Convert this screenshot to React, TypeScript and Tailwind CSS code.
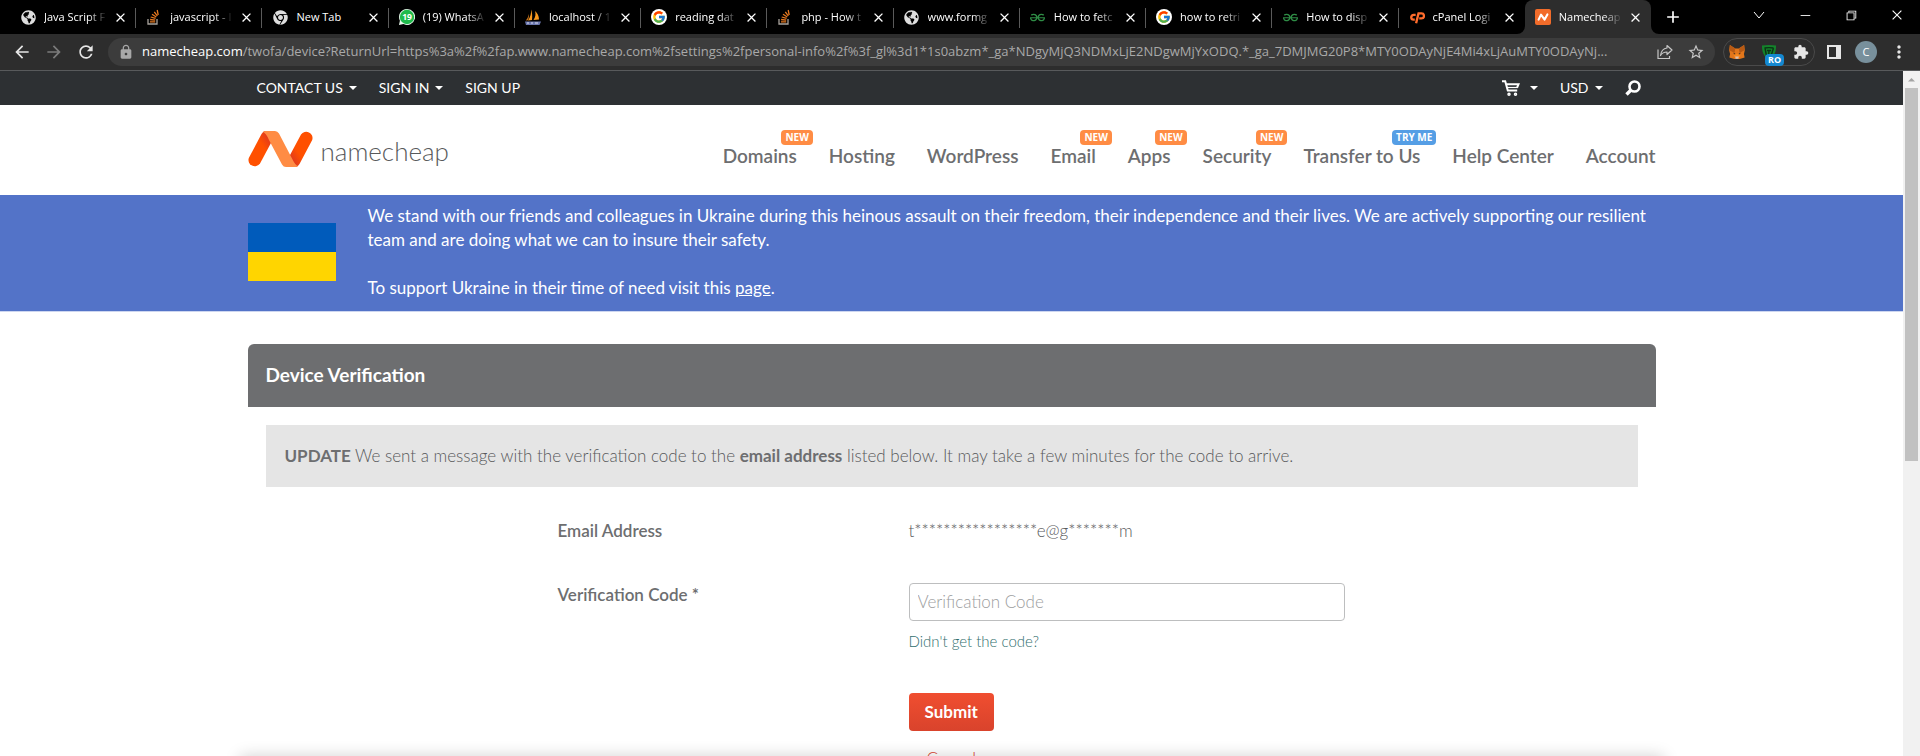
import { FaChrome, FaGlobeAmericas } from 'react-icons/fa';
import { FcGoogle } from 'react-icons/fc';
import { SiGeeksforgeeks } from 'react-icons/si';
import { MdClose, MdAdd, MdArrowBack, MdArrowForward, MdRefresh, MdLock, MdStarBorder, MdExtension, MdMoreVert } from 'react-icons/md';
import { VscChromeMinimize, VscChromeRestore, VscChromeClose } from 'react-icons/vsc';
import type { ReactNode } from 'react';

function WhatsAppIcon() {
  return (
    <svg viewBox="0 0 16 16" className="size-4">
      <path d="M8 0a8 8 0 1 1-3.6 15.1L0 16l.9-4.3A8 8 0 0 1 8 0z" fill="#e8f8ec" />
      <circle cx="8" cy="8" r="7.2" fill="#1fba4c" />
      <text x="8" y="11" textAnchor="middle" fontSize="8.5" fontWeight="700" fill="#fff" fontFamily="Open Sans, sans-serif">19</text>
    </svg>
  );
}

function StackIcon() {
  return (
    <svg viewBox="0 0 16 16" className="size-4" fill="none">
      <path d="M2 10v5h9v-5" stroke="#a8a29c" strokeWidth="1.3" />
      <path d="M4 12.800h5.200M4.100 10.500l5.100.6M4.700 8l4.900 1.400M6 5.300l4.300 2.700M8.300 2.800l3 4.100M11.200 1l1 5" stroke="#e8791f" strokeWidth="1.300" />
    </svg>
  );
}

function SailsIcon() {
  return (
    <svg viewBox="0 0 16 16" className="size-4">
      <path d="M6 .5C6.400 4 5.500 8 3 11.500l4-.5C7.500 7 7.200 3 6 .5zM10 2c1 3 .5 6-1.500 9l5.500-.5C14 7 12.500 4 10 2z" fill="#f8981d" />
      <path d="M3.500 5C3.500 7.500 2.500 9.500.8 11.500l2-.2C4 9 4.200 7 3.500 5z" fill="#c9731a" />
      <path d="M0 12.500h16l-1.500 3.500H1z" fill="#6c78af" />
      <path d="M2 14h2M6 14h2M10 14h3" stroke="#d8dcee" />
    </svg>
  );
}

function CpIcon() {
  return (
    <svg viewBox="0 0 18 16" className="w-[18px]" fill="none" stroke="#ff6c2c" strokeWidth="2.600">
      <path d="M7.500 5.500H5.200a2.700 2.700 0 0 0 0 5.400h1.300M8 15l2.700-11.200H14a2.800 2.800 0 0 1 0 5.700h-2.500" />
    </svg>
  );
}

function NamecheapTile() {
  return (
    <svg viewBox="0 0 16 16" className="size-4">
      <rect width="16" height="16" rx="2" fill="#f26c2a" />
      <path d="M3.600 10.600 6 5.600l3.600 5L12.400 5.400" fill="none" stroke="#fff" strokeWidth="2.100" strokeLinecap="round" strokeLinejoin="round" />
    </svg>
  );
}

function GoogleIcon() {
  return <span className="rounded-full bg-white p-px"><FcGoogle className="size-3.5" /></span>;
}

const tabs: { title: string; icon: ReactNode }[] = [
  { title: 'Java Script F', icon: <FaGlobeAmericas className="text-[#dedede]" /> },
  { title: 'javascript - I', icon: <StackIcon /> },
  { title: 'New Tab', icon: <FaChrome className="text-[#dedede]" /> },
  { title: '(19) WhatsA', icon: <WhatsAppIcon /> },
  { title: 'localhost / 1', icon: <SailsIcon /> },
  { title: 'reading dat', icon: <GoogleIcon /> },
  { title: 'php - How t', icon: <StackIcon /> },
  { title: 'www.formg', icon: <FaGlobeAmericas className="text-[#dedede]" /> },
  { title: 'How to fetc', icon: <SiGeeksforgeeks className="text-[#2f8d46]" /> },
  { title: 'how to retri', icon: <GoogleIcon /> },
  { title: 'How to disp', icon: <SiGeeksforgeeks className="text-[#2f8d46]" /> },
  { title: 'cPanel Logi', icon: <CpIcon /> },
  { title: 'Namecheap', icon: <NamecheapTile /> },
];

function TabStrip() {
  return (
    <div className="flex h-[34px] shrink-0 bg-black pl-2.5 text-white">
      <div className="grid min-w-0 flex-1 grid-cols-13">
        {tabs.map((tab, i) => {
          const active = i === tabs.length - 1;
          return (
            <div key={i} className={active ? 'relative flex items-center rounded-t-lg bg-[#2d2d2d] pl-2.5 pr-2' : 'relative flex items-center pl-2.5 pr-2'}>
              {active && (
                <>
                  <svg viewBox="0 0 8 8" className="absolute -left-2 bottom-0 size-2"><path d="M8 0v8H0a8 8 0 0 0 8-8z" fill="#2d2d2d" /></svg>
                  <svg viewBox="0 0 8 8" className="absolute -right-2 bottom-0 size-2"><path d="M0 0v8h8a8 8 0 0 1-8-8z" fill="#2d2d2d" /></svg>
                </>
              )}
              <span className="flex size-4 shrink-0 items-center justify-center text-[15px]">{tab.icon}</span>
              <span className={tab.title === 'New Tab' ? 'ml-2 min-w-0 flex-1 whitespace-nowrap text-[11px]' : 'ml-2 min-w-0 flex-1 whitespace-nowrap text-[11px] [mask-image:linear-gradient(to_right,black_70%,transparent)]'}>{tab.title}</span>
              <button aria-label={`Close ${tab.title}`} className="ml-1.5 shrink-0"><MdClose className="size-[15px]" /></button>
              {i < tabs.length - 2 && <span className="absolute right-0 top-2 h-5 w-px bg-[#5a5a5a]" />}
            </div>
          );
        })}
      </div>
      <button aria-label="New tab" className="ml-3 flex w-5 items-center justify-center"><MdAdd className="size-5" /></button>
      <div className="ml-[53px] flex">
        <button aria-label="Search tabs" className="flex w-[46px] items-center justify-center pb-1">
          <svg viewBox="0 0 12 8" className="w-3" fill="none" stroke="currentColor"><path d="m1 1 5 6 5-6" /></svg>
        </button>
        <button aria-label="Minimize" className="flex w-[46px] items-center justify-center pb-1"><VscChromeMinimize className="size-3.5" /></button>
        <button aria-label="Restore" className="flex w-[46px] items-center justify-center pb-1"><VscChromeRestore className="size-3.5" /></button>
        <button aria-label="Close window" className="flex w-[46px] items-center justify-center pb-1"><VscChromeClose className="size-3.5" /></button>
      </div>
    </div>
  );
}

function FoxIcon() {
  return (
    <svg viewBox="0 0 18 16" className="w-4">
      <path d="M1 0l6 4h4l6-4 .8 6-1 4 .8 4-4.600 1.400L11 16H7l-2-.6L.4 14l.8-4-1-4z" fill="#e2761b" />
      <path d="M1 0l6 4-.8 5L.5 6zM17 0l-6 4 .8 5 5.700-3z" fill="#b85a14" />
      <path d="M6.200 9l-1 3.400L7 14h4l1.800-1.600-1-3.400L9 10z" fill="#f6851b" />
      <path d="M4.500 8.600l2.600 1-.3 1.300zM13.500 8.600l-2.600 1 .3 1.300z" fill="#2b2320" />
      <path d="M7 13h4l-.4 2.500H7.400z" fill="#d7c1b3" />
    </svg>
  );
}

function ShieldIcon() {
  return (
    <svg viewBox="0 0 16 16" className="size-4">
      <path d="M1 1.500C6 .8 10 .8 15 1.500c.2 6-1.500 10.500-7 14C3 13 .8 8 1 1.500z" fill="#14832b" />
      <path d="M3.500 4c3-.5 6-.5 9 0M4 4l1.500 8M8 6.500 7.500 13M6 6.500h4M12.500 4 10 12" fill="none" stroke="#0b3315" strokeWidth="1.400" />
    </svg>
  );
}

function Toolbar() {
  return (
    <div className="flex h-[37px] shrink-0 items-center border-b border-[#585a5c] bg-[#2d2d2d] text-[#e6e6e6]">
      <button aria-label="Back" className="ml-3 flex w-5 justify-center"><MdArrowBack className="size-5" /></button>
      <button aria-label="Forward" className="ml-3 flex w-5 justify-center text-[#7b7b7b]"><MdArrowForward className="size-5" /></button>
      <button aria-label="Reload" className="ml-3 flex w-5 justify-center"><MdRefresh className="size-5" /></button>
      <div className="ml-3 flex h-7 min-w-0 flex-1 items-center rounded-full bg-[#3c3c3c] px-2.5">
        <MdLock className="size-4 shrink-0 text-[#a8a8a8]" />
        <p className="ml-2 min-w-0 flex-1 whitespace-nowrap text-[13px] text-[#a9a9a9]">
          <span className="text-white">namecheap.com</span>/twofa/device?ReturnUrl=https%3a%2f%2fap.www.namecheap.com%2fsettings%2fpersonal-info%2f%3f_gl%3d1*1s0abzm*_ga*NDgyMjQ3NDMxLjE2NDgwMjYxODQ.*_ga_7DMJMG20P8*MTY0ODAyNjE4Mi4xLjAuMTY0ODAyNj...
        </p>
        <button aria-label="Share" className="ml-3 text-[#c6c6c6]">
          <svg viewBox="0 0 16 16" className="size-4" fill="none" stroke="currentColor" strokeWidth="1.200">
            <path d="M1 5.500V14.500h11.500V12" />
            <path d="M10 1.500 15 6l-5 4.500V8C7 8 5 9 3.500 11.500 4 7.500 6.500 4.500 10 4z" strokeLinejoin="round" />
          </svg>
        </button>
        <button aria-label="Bookmark" className="ml-3.5 text-[#c6c6c6]"><MdStarBorder className="size-[18px]" /></button>
      </div>
      <div className="ml-2 flex h-7 w-[92px] items-center justify-between rounded-full border border-[#4a4a4a] px-[5px]">
        <FoxIcon />
        <span className="relative">
          <ShieldIcon />
          <span className="absolute -bottom-1.5 left-1 rounded-sm bg-[#1488d0] px-[3px] text-[9px] font-bold leading-3 text-white">RO</span>
        </span>
        <MdExtension className="size-4" />
      </div>
      <svg viewBox="0 0 14 14" className="ml-3 size-3.5"><path d="M0 0h14v14H0zM2 2v10h7V2z" fill="currentColor" fillRule="evenodd" /></svg>
      <span className="ml-3.5 flex size-[22px] items-center justify-center rounded-full bg-[#78909c] text-[11px] text-white">C</span>
      <button aria-label="Menu" className="ml-3 mr-[11px]"><MdMoreVert className="size-5" /></button>
    </div>
  );
}

function Caret() {
  return <svg viewBox="0 0 8 4" className="w-2"><path d="M0 0h8L4 4z" fill="currentColor" /></svg>;
}

function TopBar() {
  return (
    <div className="bg-[#2d3033] text-white">
      <div className="mx-auto flex h-[34px] max-w-[1408px] items-center px-[9px] text-sm">
        <button className="flex items-center gap-1.5">CONTACT US <Caret /></button>
        <button className="ml-[22px] flex items-center gap-1.5">SIGN IN <Caret /></button>
        <a href="#signup" className="ml-[22px]">SIGN UP</a>
        <button aria-label="Cart" className="ml-auto flex items-center gap-2.5">
          <svg viewBox="0 0 18 16" className="w-[18px]" fill="none" stroke="currentColor" strokeWidth="2">
            <path d="M0 1.200h3.200l2.600 9.300h9.400M4 4.200h12.500l-1.500 3.600" />
            <path d="M4.500 7.500h11" strokeWidth="1.200" />
            <circle cx="7" cy="14.200" r="1" strokeWidth="1.500" /><circle cx="13.500" cy="14.200" r="1" strokeWidth="1.500" />
          </svg>
          <Caret />
        </button>
        <button className="ml-[22px] flex items-center gap-1.5">USD <Caret /></button>
        <button aria-label="Search" className="ml-[22px] mr-1.5">
          <svg viewBox="0 0 16 16" className="size-4" fill="none" stroke="currentColor"><circle cx="9.500" cy="6.500" r="5" strokeWidth="2.600" /><path d="M6 10 1.500 14.500" strokeWidth="3.400" /></svg>
        </button>
      </div>
    </div>
  );
}

const nav: { label: string; badge?: string }[] = [
  { label: 'Domains', badge: 'NEW' },
  { label: 'Hosting' },
  { label: 'WordPress' },
  { label: 'Email', badge: 'NEW' },
  { label: 'Apps', badge: 'NEW' },
  { label: 'Security', badge: 'NEW' },
  { label: 'Transfer to Us', badge: 'TRY ME' },
  { label: 'Help Center' },
  { label: 'Account' },
];

function Logo() {
  return (
    <a href="#home" className="flex items-end gap-2 pb-0.5">
      <svg viewBox="0 0 65 36" className="w-[65px]">
        <defs>
          <linearGradient id="l1" x1="0" y1="1" x2="1" y2="0"><stop offset="0.600" stopColor="#ff5000" /><stop offset="1" stopColor="#cf2c2e" /></linearGradient>
          <linearGradient id="l2" x1="1" y1="0" x2="0" y2="1"><stop offset="0.600" stopColor="#ff5000" /><stop offset="1" stopColor="#cf2c2e" /></linearGradient>
        </defs>
        <path d="M17 0 23.500 11 12 32.500A6.300 6.300 0 0 1 .8 27L13.500 3Q15 .5 17 0z" fill="url(#l1)" />
        <path d="M48 36 41.500 25 53 3.500A6.300 6.300 0 0 1 64.200 9L51.500 33Q50 35.500 48 36z" fill="url(#l2)" />
        <path d="M17.500 0H27q2.500 0 4 2.500L44 27.500Q47 34 50 35 49 36 47.500 36H38q-2.500 0-4-2.500L21 9Q18 2 15 1 16 0 17.500 0z" fill="#ff8c44" />
      </svg>
      <span className="text-[26px] font-light leading-8 text-[#58595b]">namecheap</span>
    </a>
  );
}

function Header() {
  return (
    <header className="mx-auto flex h-[90px] max-w-[1408px] items-center justify-between">
      <Logo />
      <nav className="flex gap-8 pt-3 text-[19px] font-semibold leading-6 text-[#6d6e70]">
        {nav.map((item) => (
          <a key={item.label} href="#nav" className="relative whitespace-nowrap">
            {item.label}
            {item.badge && (
              <span className={item.badge === 'NEW' ? "absolute -right-4 -top-3.5 rounded bg-[#ff8c44] px-1 font-['Open_Sans',sans-serif] text-[10px] font-bold leading-[15px] text-white" : "absolute -right-4 -top-3.5 rounded bg-[#559ee5] px-1 font-['Open_Sans',sans-serif] text-[10px] font-bold leading-[15px] text-white"}>{item.badge}</span>
            )}
          </a>
        ))}
      </nav>
    </header>
  );
}

function Banner() {
  return (
    <section className="border-b border-[#cdd6f0] bg-[#5373c8] text-white">
      <div className="mx-auto flex max-w-[1408px] items-center gap-8 pb-[11px] pt-[9px]">
        <div className="flex h-[58px] w-[88px] shrink-0 flex-col">
          <span className="flex-1 bg-[#005bbb]" />
          <span className="flex-1 bg-[#ffd500]" />
        </div>
        <div className="text-[17px] leading-6">
          <p>We stand with our friends and colleagues in Ukraine during this heinous assault on their freedom, their independence and their lives. We are actively supporting our resilient team and are doing what we can to insure their safety.</p>
          <p className="mt-6">To support Ukraine in their time of need visit this <a href="#support" className="underline">page</a>.</p>
        </div>
      </div>
    </section>
  );
}

function VerificationPanel() {
  return (
    <section className="mx-auto mt-8 max-w-[1408px] text-[17px] leading-6 text-[#6d6e70]">
      <h1 className="rounded-t-md bg-[#6d6e70] px-[18px] pb-[21px] pt-[19px] text-[19px] font-bold leading-[23px] text-white">Device Verification</h1>
      <p className="mx-[18px] mt-[18px] bg-[#e5e5e5] px-[19px] py-[19px] font-light text-[#58595b]">
        <strong className="font-bold text-[#6d6e70]">UPDATE</strong> We sent a message with the verification code to the <strong className="font-bold text-[#6d6e70]">email address</strong> listed below. It may take a few minutes for the code to arrive.
      </p>
      <form className="grid grid-cols-[351px_1fr] pl-[310px] pt-8">
        <span className="font-semibold">Email Address</span>
        <span className="font-light text-[#58595b]">t*****************e@g*******m</span>
        <label htmlFor="code" className="mt-10 font-semibold">Verification Code *</label>
        <div className="mt-10">
          <input id="code" placeholder="Verification Code" className="block h-[38px] w-[436px] rounded border border-[#bdbebf] bg-white px-2 pb-0.5 font-light placeholder:text-[#9c9d9e]" />
          <a href="#resend" className="mt-2.5 block text-[15px] font-light leading-5 text-[#2f6e6d]">Didn't get the code?</a>
          <button type="button" className="mt-[42px] block h-[38px] rounded bg-linear-to-b from-[#f04e30] to-[#d9432c] px-4 font-bold text-white">Submit</button>
          <a href="#cancel" className="ml-[18px] mt-4 block font-light text-[#d9432c]">Cancel</a>
        </div>
      </form>
    </section>
  );
}

function Scrollbar() {
  return (
    <div aria-hidden="true" className="flex w-[17px] shrink-0 flex-col items-center bg-[#f1f1f1]">
      <svg viewBox="0 0 17 17" className="w-[17px]"><path d="M5 10.500h7L8.500 7z" fill="#a3a3a3" /></svg>
      <span className="h-[54.5%] w-[13px] bg-[#c1c1c1]" />
    </div>
  );
}

export default function App() {
  return (
    <div className="flex h-screen flex-col overflow-hidden bg-white font-['Open_Sans','Noto_Sans',sans-serif]">
      <TabStrip />
      <Toolbar />
      <div className="flex min-h-0 flex-1">
        <main className="relative min-w-0 flex-1 overflow-hidden font-['Lato',sans-serif]">
          <TopBar />
          <Header />
          <Banner />
          <VerificationPanel />
          <div className="absolute inset-x-0 top-full mx-auto h-5 max-w-[1424px] shadow-[0_0_16px_rgba(0,0,0,0.18)]" />
        </main>
        <Scrollbar />
      </div>
    </div>
  );
}
